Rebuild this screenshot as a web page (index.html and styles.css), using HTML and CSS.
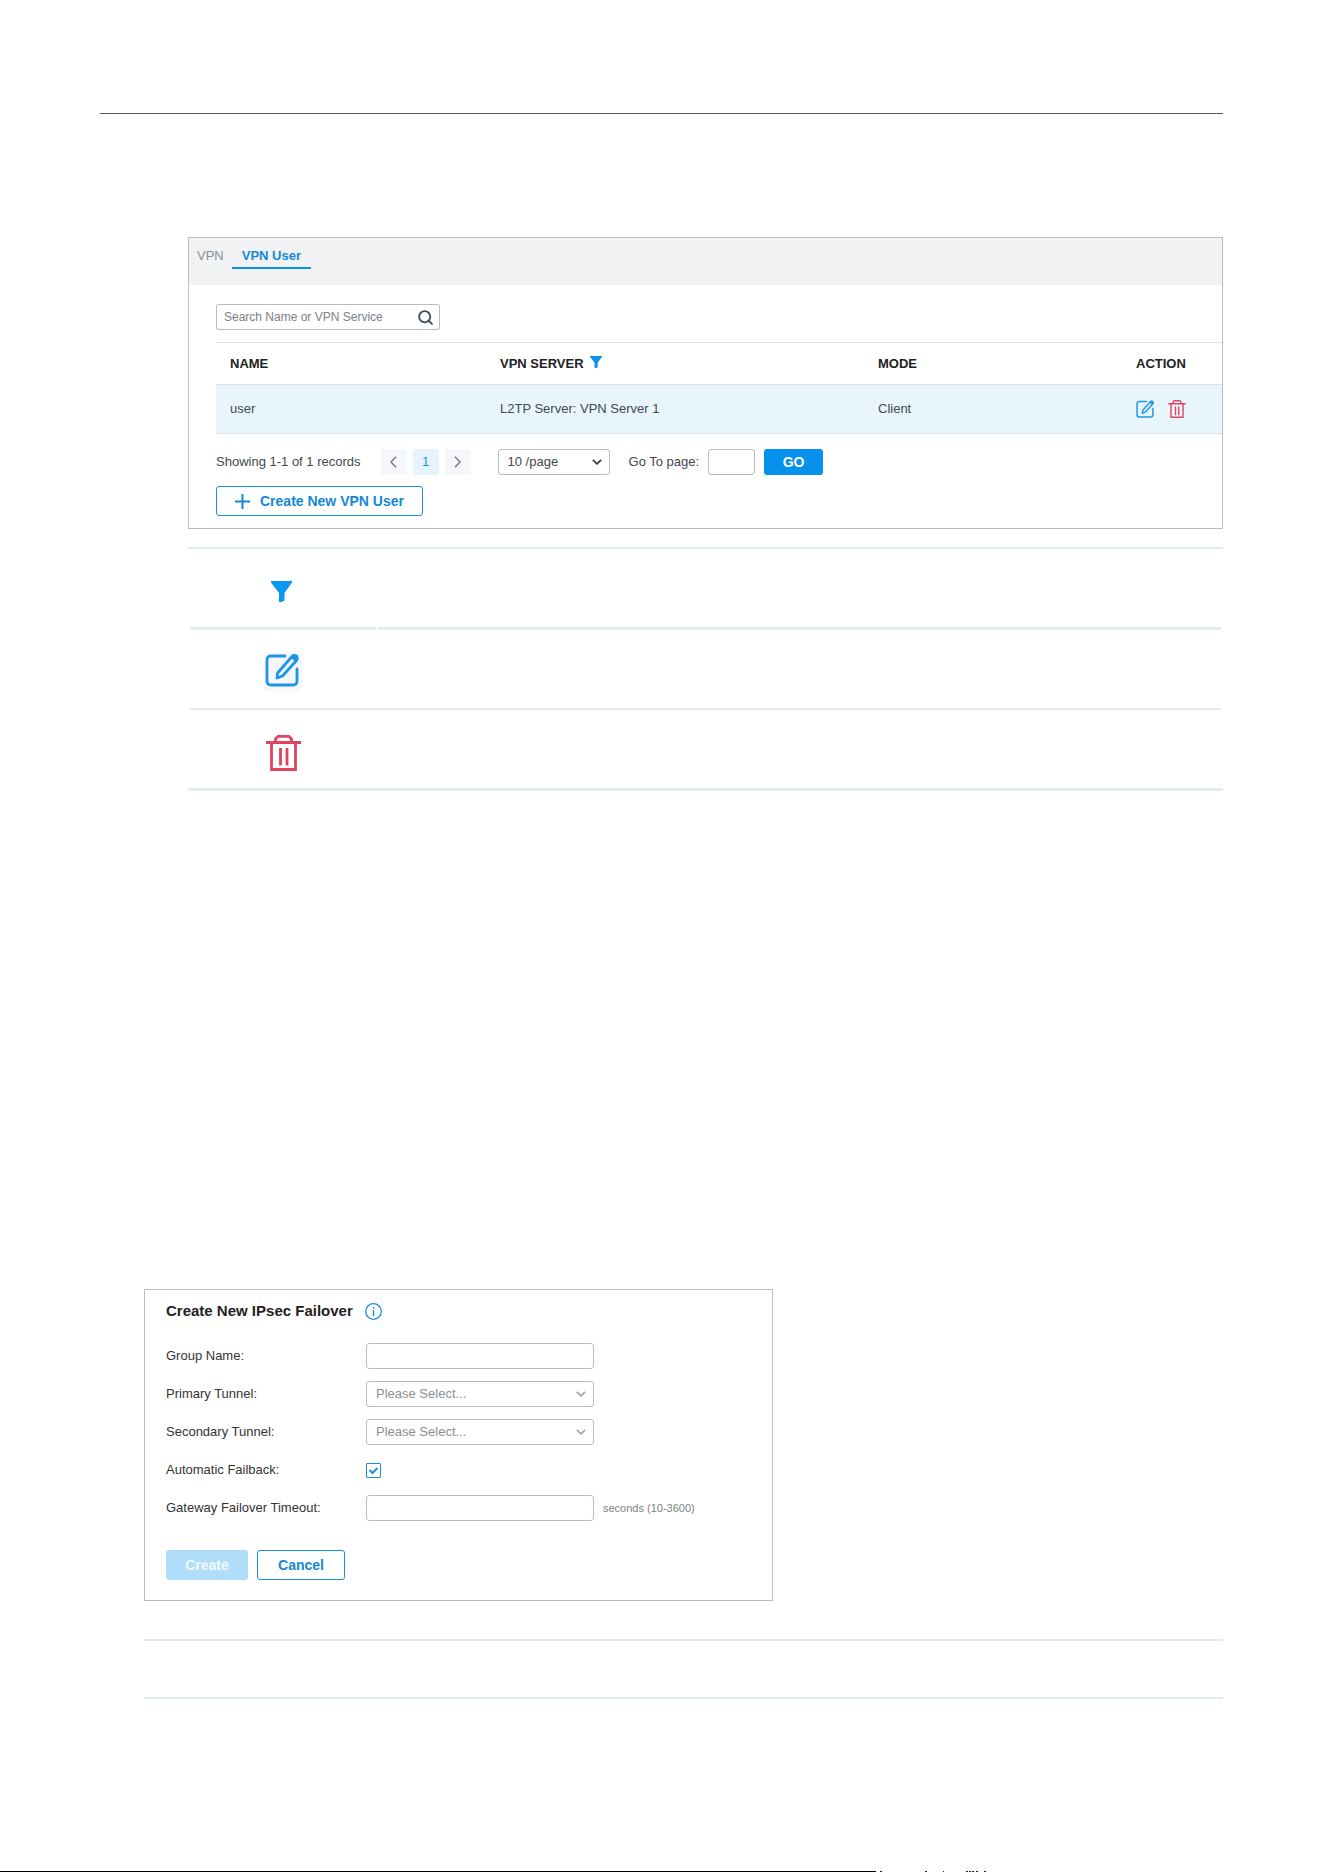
FILE: index.html
```html
<!DOCTYPE html>
<html lang="en">
<head>
<meta charset="utf-8">
<meta name="viewport" content="width=device-width, initial-scale=1">
<title>VPN User</title>
<link rel="stylesheet" href="styles.css">
</head>
<body>
<svg class="symbols" aria-hidden="true">
  <symbol id="funnel" viewBox="0 0 21 21"><path fill="currentColor" d="M0 0h21v1.500L13.500 12v7.500L10.500 21H8v-9L0 1.500z"/></symbol>
  <symbol id="edit" viewBox="0 0 34 34"><g fill="none" stroke="currentColor" stroke-width="2.800" stroke-linejoin="round" stroke-linecap="round"><path d="M20 3H6Q2 3 2 7v21q0 4 4 4h22q4 0 4-4V16"/><path d="M12 25l.6-5L27 3.500q2-2 4 0t.5 4L17.500 23z"/></g><path fill="currentColor" d="M25.500 4.500L28 1l5 1 .5 4-3 3z"/></symbol>
  <symbol id="trash" viewBox="0 0 35 36"><g fill="none" stroke="currentColor" stroke-width="2.800"><path d="M0 7.500h35M5.500 7.500v27h24v-27M9.500 7V4l2.500-2.600h11L25.500 4v3M14.500 13v17.500M21 13v17.500"/></g></symbol>
  <symbol id="chevron" viewBox="0 0 10 6"><path fill="none" stroke="currentColor" stroke-width="1.800" d="M.8.800L5 4.800 9.200.8"/></symbol>
</svg>

<main class="page">
  <hr class="page-rule">

  <section class="panel users">
    <nav class="tabs">
      <a class="tab" href="#vpn">VPN</a>
      <a class="tab tab-active" href="#users">VPN User</a>
    </nav>
    <div class="users-body">
      <div class="search">
        <input class="search-input" type="text" placeholder="Search Name or VPN Service" aria-label="Search Name or VPN Service">
        <svg class="search-icon" viewBox="0 0 15 15" aria-hidden="true"><g fill="none" stroke="currentColor" stroke-width="1.800"><circle cx="6.700" cy="6.700" r="5.600"/><path d="M10.500 10.500l4 4"/></g></svg>
      </div>
      <table class="user-table">
        <thead>
          <tr><th class="col-name">NAME</th><th class="col-server">VPN SERVER <svg class="filter-icon" aria-hidden="true"><use href="#funnel"/></svg></th><th>MODE</th><th class="col-action">ACTION</th></tr>
        </thead>
        <tbody>
          <tr>
            <td>user</td><td>L2TP Server: VPN Server 1</td><td>Client</td>
            <td><div class="actions">
              <button class="icon-button edit" type="button" aria-label="Edit"><svg class="action-icon"><use href="#edit"/></svg></button>
              <button class="icon-button delete" type="button" aria-label="Delete"><svg class="action-icon"><use href="#trash"/></svg></button>
            </div></td>
          </tr>
        </tbody>
      </table>
      <div class="pager">
        <span>Showing 1-1 of 1 records</span>
        <div class="pages">
          <button class="page-button" type="button" aria-label="Previous page"><svg class="page-arrow" viewBox="0 0 7 12"><path d="M6 .8L1 6l5 5.200"/></svg></button>
          <button class="page-button page-current" type="button">1</button>
          <button class="page-button" type="button" aria-label="Next page"><svg class="page-arrow" viewBox="0 0 7 12"><path d="M1 .8L6 6l-5 5.200"/></svg></button>
        </div>
        <div class="select-wrap page-size">
          <select class="field" aria-label="Records per page"><option>10 /page</option></select>
          <svg class="select-arrow" aria-hidden="true"><use href="#chevron"/></svg>
        </div>
        <div class="go-to">
          <label for="goto">Go To page:</label>
          <input class="field goto-input" id="goto" type="text">
          <button class="button-go" type="button">GO</button>
        </div>
      </div>
      <button class="button button-outline button-add" type="button"><svg class="plus-icon" viewBox="0 0 15 15" aria-hidden="true"><path stroke="currentColor" stroke-width="2" d="M7.500 0v15M0 7.500h15"/></svg>Create New VPN User</button>
    </div>
  </section>

  <section class="legend">
    <div class="legend-row legend-split"><div class="legend-cell"><svg class="legend-funnel" aria-hidden="true"><use href="#funnel"/></svg></div><div class="legend-cell"></div></div>
    <div class="legend-row"><div class="legend-cell"><span class="legend-tint"><svg class="legend-icon edit" aria-hidden="true"><use href="#edit"/></svg></span></div></div>
    <div class="legend-row legend-last"><div class="legend-cell"><svg class="legend-icon delete" aria-hidden="true"><use href="#trash"/></svg></div></div>
  </section>

  <form class="panel failover">
    <h2 class="form-title">Create New IPsec Failover
      <svg class="info-icon" viewBox="0 0 17 17" aria-hidden="true"><circle cx="8.500" cy="8.500" r="7.800" fill="none" stroke="currentColor" stroke-width="1.300"/><path stroke="currentColor" stroke-width="1.500" d="M8.500 4v1.800M8.500 7v6"/></svg>
    </h2>
    <div class="form-grid">
      <label for="group">Group Name:</label>
      <input class="field" id="group" type="text">
      <label for="primary">Primary Tunnel:</label>
      <div class="select-wrap">
        <select class="field placeholder" id="primary"><option>Please Select...</option></select>
        <svg class="select-arrow arrow-light" aria-hidden="true"><use href="#chevron"/></svg>
      </div>
      <label for="secondary">Secondary Tunnel:</label>
      <div class="select-wrap">
        <select class="field placeholder" id="secondary"><option>Please Select...</option></select>
        <svg class="select-arrow arrow-light" aria-hidden="true"><use href="#chevron"/></svg>
      </div>
      <label for="failback">Automatic Failback:</label>
      <div class="check-wrap">
        <input class="check" id="failback" type="checkbox" checked>
        <svg class="check-mark" viewBox="0 0 15 15" aria-hidden="true"><path fill="none" stroke="currentColor" stroke-width="2" d="M3.500 7L6.500 10l5-5"/></svg>
      </div>
      <label for="timeout">Gateway Failover Timeout:</label>
      <input class="field" id="timeout" type="text">
      <span class="unit">seconds (10-3600)</span>
    </div>
    <div class="form-actions">
      <button class="button button-disabled" type="button" disabled>Create</button>
      <button class="button button-outline button-cancel" type="button">Cancel</button>
    </div>
  </form>

  <div class="empty-row"></div>
</main>
<footer class="page-end">
  <div class="end-bar"></div>
  <svg class="end-marks" viewBox="0 0 111 1" aria-hidden="true"><path fill="#222" d="M4 0h2v1H4zM49 0h2v1h-2zM67 0h1v1h-1zM90 0h2v1h-2zM93 0h2v1h-2zM96 0h2v1h-2zM100 0h2v1h-2zM108 0h2v1h-2z"/></svg>
</footer>
</body>
</html>
```

FILE: styles.css
```css
* { box-sizing: border-box; }

body {
  margin: 0;
  min-height: 100vh;
  display: flex;
  flex-direction: column;
  background: #fff;
  color: #42484f;
  font: 13px/20px "Liberation Sans", Arial, sans-serif;
}

button, input, select { font: inherit; color: inherit; }
button { padding: 0; cursor: pointer; }
svg { display: block; }
.symbols { position: absolute; width: 0; height: 0; }

.page { padding: 113px 101px 0 100px; }
.page-rule { margin: 0 0 123px; border: 0; border-top: 1px solid #58595b; }
.panel { border: 1px solid #bbb; }

/* VPN user list */
.users { margin-left: 88px; }
.tabs {
  display: flex;
  align-items: flex-start;
  gap: 8px;
  height: 47px;
  padding-left: 8px;
  background: #f0f2f4;
}
.tab { padding-top: 8px; color: #8b8f93; text-decoration: none; }
.tab-active {
  padding: 8px 10px 1px;
  border-bottom: 2px solid #0d92e6;
  color: #1588d6;
  font-weight: bold;
}
.users-body { padding: 19px 0 12px 27px; }

.search { position: relative; width: 224px; margin-bottom: 12px; }
.search-input {
  display: block;
  width: 100%;
  height: 26px;
  padding: 0 34px 0 7px;
  border: 1px solid #bbb;
  border-radius: 2px;
  font-size: 12px;
}
.search-input::placeholder { color: #7d8185; opacity: 1; }
.search-icon { position: absolute; right: 7px; top: 6px; width: 15px; height: 15px; color: #3f4b5a; }

.user-table { width: 100%; border-collapse: collapse; table-layout: fixed; }
.user-table th, .user-table td {
  padding: 0 0 0 14px;
  border-top: 1px solid #dfe1e3;
  border-bottom: 1px solid #dfe1e3;
  text-align: left;
}
.user-table th { height: 42px; color: #222; }
.user-table td { height: 49px; background: #e8f5fd; }
.col-name { width: 270px; }
.col-server { width: 378px; }
.col-action { width: 100px; }
.filter-icon { display: inline-block; width: 12px; height: 12px; margin-left: 3px; color: #0d92e6; }
.actions { display: flex; gap: 14px; }
.icon-button { border: 0; background: none; }
.action-icon { width: 18px; height: 18px; }
.edit { color: #1c96e5; }
.delete { color: #e0435f; }

.pager { display: flex; align-items: center; margin: 15px 0 11px; }
.pages { display: flex; gap: 6px; margin: 0 27px 0 20px; }
.page-button {
  display: flex;
  align-items: center;
  justify-content: center;
  width: 26px;
  height: 26px;
  border: 0;
  border-radius: 3px;
  background: #f6f7fa;
}
.page-current { background: #e6f4fd; color: #1c96e5; }
.page-arrow { width: 7px; height: 12px; fill: none; stroke: #777c82; stroke-width: 1.5px; }

.field {
  display: block;
  width: 100%;
  height: 26px;
  padding: 0 9px;
  border: 1px solid #bbb;
  border-radius: 3px;
  background: #fff;
  appearance: none;
}
.select-wrap { position: relative; }
.select-arrow { position: absolute; right: 8px; top: 10px; width: 10px; height: 6px; color: #333a42; pointer-events: none; }
.arrow-light { color: #a5a8ab; }
.page-size { width: 112px; margin-right: 19px; }
.go-to { display: flex; align-items: center; gap: 9px; }
.goto-input { width: 47px; padding: 0 4px; }
.button-go {
  width: 59px;
  height: 26px;
  border: 0;
  border-radius: 3px;
  background: #0591ec;
  color: #fff;
  font-size: 14px;
  font-weight: bold;
}

.button { height: 30px; border: 1px solid transparent; border-radius: 3px; font-size: 14px; font-weight: bold; }
.button-outline { border-color: #1c8fda; background: #fff; color: #1588d6; }
.button-add { display: flex; align-items: center; gap: 10px; padding: 0 18px; }
.plus-icon { width: 15px; height: 15px; }

/* Icon legend */
.legend { margin: 18px 0 498px 88px; border-top: 2px solid #e3ecf1; }
.legend-row {
  display: grid;
  grid-template-columns: 186px 1fr;
  gap: 2px;
  height: 80px;
  margin: 0 2px;
  border-bottom: 2px solid #e3ecf1;
}
.legend-split { height: 81px; border-bottom: 0; }
.legend-split .legend-cell { padding-right: 4px; border-bottom: 3px solid #e3ecf1; }
.legend-last { height: 81px; margin: 0; padding: 0 2px; border-bottom-width: 3px; }
.legend-cell { display: flex; align-items: center; justify-content: center; padding-top: 6px; }
.legend-last .legend-cell { padding-top: 8px; }
.legend-funnel { width: 21px; height: 21px; color: #0799f0; }
.legend-tint { padding: 0 3px 4px 1px; background: #f5f7fd; }
.legend-icon { width: 35px; height: 36px; }
.legend-icon.edit { width: 34px; height: 34px; }

/* Failover form */
.failover { max-width: 629px; margin-left: 44px; padding: 11px 21px 20px; color: #333; }
.form-title {
  display: flex;
  align-items: center;
  gap: 12px;
  margin: 0 0 22px;
  color: #222;
  font-size: 15px;
  line-height: 20px;
}
.info-icon { width: 17px; height: 17px; color: #1c8fda; }
.form-grid {
  display: grid;
  grid-template-columns: 191px 228px 1fr;
  grid-auto-rows: 26px;
  gap: 12px 9px;
  align-items: center;
}
.form-grid label { grid-column: 1; }
.placeholder { color: #8b8f93; }
.check-wrap { position: relative; width: 15px; height: 15px; }
.check { display: block; width: 15px; height: 15px; margin: 0; border: 1px solid #1c8fda; border-radius: 1px; background: #fff; appearance: none; }
.check-mark { position: absolute; inset: 0; color: #1c8fda; pointer-events: none; }
.unit { color: #7d8185; font-size: 11px; }
.form-actions { display: flex; gap: 9px; margin-top: 29px; }
.button-disabled { width: 82px; background: #b0ddfa; color: #f2faff; }
.button-cancel { width: 88px; }

.empty-row { height: 60px; margin: 38px 0 0 44px; border: solid #e3ecf1; border-width: 2px 0; }

.page-end { display: flex; margin-top: auto; }
.end-bar { width: 66.2%; height: 1px; background: #000; }
.end-marks { width: 111px; height: 1px; }
```
